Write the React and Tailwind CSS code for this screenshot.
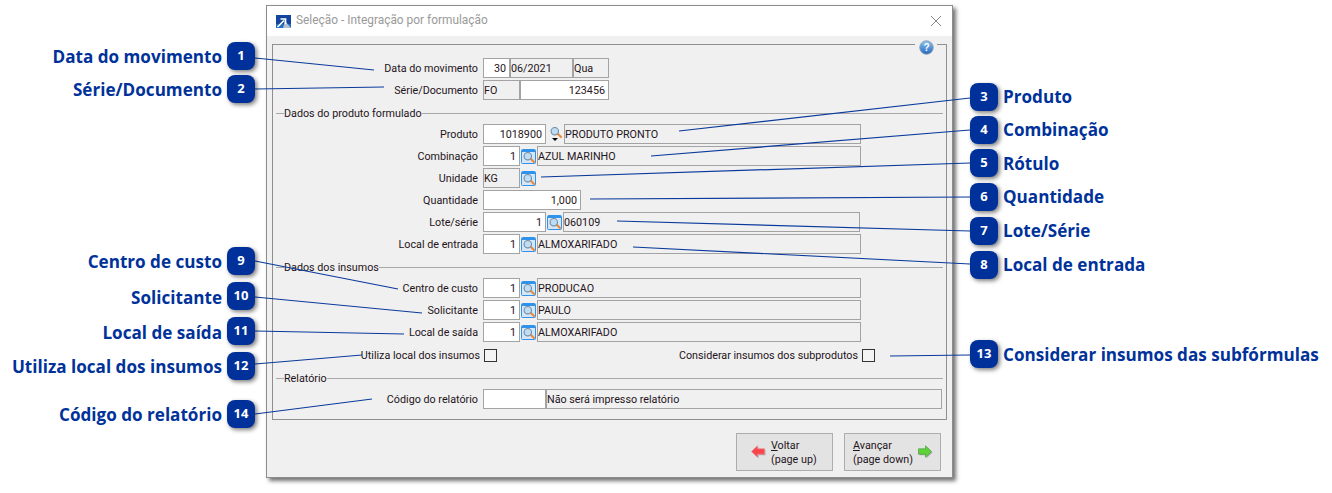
const UI = "font-['Roboto','Liberation_Sans',sans-serif] text-[10.75px] leading-none text-[#1f1420]";

function SearchIcon({ framed = true }) {
  return (
    <svg width="15" height="15" viewBox="0 0 15 15" className="block">
      {framed && <rect x="0.5" y="0.5" width="14" height="14" rx="1" fill="#d6e6f5" stroke="#2f93ec" />}
      {framed && <rect x="1" y="1" width="13" height="2" fill="#2f93ec" />}
      <line x1="9.5" y1="9.5" x2="13" y2="13" stroke="#ee8a3a" strokeWidth="2.2" strokeLinecap="round" />
      <circle cx="6.8" cy="7.2" r="3.7" fill="#bfdcf2" stroke="#6f8ea6" strokeWidth="1.1" />
    </svg>
  );
}

function Lookup() {
  return (
    <div className="w-[15px] h-[20px] flex items-center justify-center">
      <SearchIcon />
    </div>
  );
}

function Field({ w, white, right, children }) {
  return (
    <div
      className={`h-[20px] pt-[2px] border border-[#a3a3a3] flex items-center whitespace-nowrap overflow-hidden ${white ? "bg-white" : "bg-[#f0f0f0]"} ${right ? "justify-end pr-[3px]" : ""}`}
      style={{ width: w }}
    >
      {children}
    </div>
  );
}

function Row({ label, children, mt = "mt-[2px]" }) {
  return (
    <div className={`flex items-center h-[20px] ${mt}`}>
      <div className="w-[205px] pt-[2px] text-right whitespace-nowrap">{label}</div>
      <div className="ml-[5px] flex items-center gap-[1px]">{children}</div>
    </div>
  );
}

function Lk({ label, code, codeW = 37, text, textW = 324, mt }) {
  return (
    <Row label={label} mt={mt}>
      <Field w={codeW} white right>{code}</Field>
      <Lookup />
      <Field w={textW}>{text}</Field>
    </Row>
  );
}

function Section({ title, className }) {
  return (
    <div className={`flex items-center h-[12px] pl-[3px] pr-[3px] ${className}`}>
      <div className="w-[8px] h-px bg-[#a8a8a8]" />
      <span className="block pt-[2px] whitespace-nowrap">{title}</span>
      <div className="flex-1 h-px bg-[#a8a8a8]" />
    </div>
  );
}

function Arrow({ dir }) {
  const left = dir === "left";
  const d = left
    ? "M0.5 6.5 L6.5 0.8 V3.8 H13.5 V9.2 H6.5 V12.2 Z"
    : "M13.5 6.5 L7.5 0.8 V3.8 H0.5 V9.2 H7.5 V12.2 Z";
  return (
    <svg width="15" height="14" viewBox="0 0 15 14" className="block shrink-0">
      <path d={d} fill="#00000040" transform="translate(1 1)" />
      <path d={d} fill={left ? "#fb444c" : "#5fd23a"} stroke={left ? "#e8888c" : "#4f9f48"} strokeWidth="0.7" />
    </svg>
  );
}

function Badge({ n, className }) {
  return (
    <div className={`absolute w-[28px] h-[28px] rounded-[8px] bg-[#00309a] text-white flex items-center justify-center font-['Open_Sans',sans-serif] text-[13px] font-bold shadow-[2px_2px_4px_rgba(0,0,0,0.5)] ${className}`}>
      {n}
    </div>
  );
}

const LBL = "absolute whitespace-nowrap font-['Open_Sans',sans-serif] font-bold text-[17.1px] leading-[24px] text-[#00329a]";

const lines = [
  [255, 58, 374, 70], [255, 89, 384, 87], [970, 98, 679, 131], [970, 130, 651, 156],
  [970, 163, 541, 177], [970, 197, 590, 199], [970, 231, 617, 221], [970, 264, 633, 247],
  [255, 261, 398, 289], [255, 297, 422, 313], [255, 331, 404, 334], [255, 364, 362, 355],
  [970, 355, 890, 356], [255, 414, 372, 399],
];

export default function App() {
  return (
    <div className="relative w-[1332px] h-[493px] bg-white overflow-hidden pt-[5px] pl-[266px]">
      <div className={`w-[687px] h-[473px] bg-[#f0f0f0] border border-[#8c8c8c] shadow-[3px_3px_4px_rgba(0,0,0,0.55)] flex flex-col ${UI}`}>
        <div className="h-[30px] bg-white flex items-center pl-[9px] pr-[10px] shrink-0">
          <svg width="15" height="13" viewBox="0 0 15 13" className="block">
            <rect width="15" height="13" fill="#12459e" />
            <rect y="9" width="15" height="4" fill="#1f6fc4" />
            <path d="M9 6 L15 13 H7 Z" fill="#b4c0d0" />
            <path d="M1.5 12 L8 5.5 M4.5 4 H9.5 V9" stroke="#fff" strokeWidth="1.7" fill="none" />
          </svg>
          <span className="ml-[5px] text-[11.9px] text-[#9a9a9a]">Seleção - Integração por formulação</span>
          <svg width="12" height="12" viewBox="0 0 12 12" className="ml-auto block">
            <path d="M1 1 L11 11 M11 1 L1 11" stroke="#888" strokeWidth="1" />
          </svg>
        </div>

        <div className="relative mt-[8px] mx-[5px] h-[376px] border border-[#8f8f8f] flex flex-col pt-[13px]">
          <div className="absolute -top-[6px] right-[9px] w-[22px] h-[16px] bg-[#f0f0f0] flex items-center justify-center">
            <svg width="15" height="15" viewBox="0 0 15 15" className="block">
              <defs>
                <linearGradient id="h" x1="0" y1="0" x2="0" y2="1">
                  <stop offset="0" stopColor="#8cc4f0" />
                  <stop offset="1" stopColor="#2468c0" />
                </linearGradient>
              </defs>
              <circle cx="7.5" cy="7.5" r="6.8" fill="url(#h)" stroke="#8c9aa8" strokeWidth="0.8" />
              <text x="7.5" y="11" textAnchor="middle" fontSize="10" fontWeight="700" fill="#fff" fontFamily="'Liberation Sans',sans-serif">?</text>
            </svg>
          </div>

          <Row label="Data do movimento" mt="mt-0">
            <div className="flex">
              <Field w={27} white right>30</Field>
              <Field w={63}>06/2021</Field>
              <Field w={36}>Qua</Field>
            </div>
          </Row>
          <Row label="Série/Documento">
            <div className="flex">
              <Field w={37}>FO</Field>
              <Field w={89} white right>123456</Field>
            </div>
          </Row>

          <Section title="Dados do produto formulado" className="mt-[7px]" />

          <Row label="Produto" mt="mt-[5px]">
            <Field w={63} white right>1018900</Field>
            <div className="w-[16px] h-[20px] flex flex-col items-center">
              <SearchIcon framed={false} />
              <div className="w-0 h-0 -mt-[1px] border-l-[3px] border-r-[3px] border-t-[3px] border-l-transparent border-r-transparent border-t-black" />
            </div>
            <Field w={297}>PRODUTO PRONTO</Field>
          </Row>
          <Lk label="Combinação" code="1" text="AZUL MARINHO" />
          <Row label="Unidade">
            <Field w={37}>KG</Field>
            <Lookup />
          </Row>
          <Row label="Quantidade">
            <Field w={98} white right>1,000</Field>
          </Row>
          <Lk label="Lote/série" code="1" codeW={63} text="060109" textW={297} />
          <Lk label="Local de entrada" code="1" text="ALMOXARIFADO" />

          <Section title="Dados dos insumos" className="mt-[7px]" />

          <Lk label="Centro de custo" code="1" text="PRODUCAO" mt="mt-[5px]" />
          <Lk label="Solicitante" code="1" text="PAULO" />
          <Lk label="Local de saída" code="1" text="ALMOXARIFADO" />

          <div className="flex items-center h-[14px] mt-[6px]">
            <div className="w-[207px] pt-[2px] text-right whitespace-nowrap">Utiliza local dos insumos</div>
            <div className="ml-[4px] w-[13px] h-[13px] border border-[#333] bg-[#f4f4f4]" />
            <div className="w-[361px] pt-[2px] text-right whitespace-nowrap">Considerar insumos dos subprodutos</div>
            <div className="ml-[4px] w-[13px] h-[13px] border border-[#333] bg-[#f4f4f4]" />
          </div>

          <Section title="Relatório" className="mt-[10px]" />

          <Row label="Código do relatório" mt="mt-[5px]">
            <div className="flex">
              <Field w={63} white />
              <Field w={396}>Não será impresso relatório</Field>
            </div>
          </Row>
        </div>

        <div className="flex justify-end gap-[11px] mt-[13px] pr-[11px]">
          <button className="w-[97px] h-[38px] bg-[#e3e3e3] border border-[#adadad] flex items-center pl-[14px] gap-[5px] text-left">
            <Arrow dir="left" />
            <span className="block pt-[2px] leading-[14px]"><u>V</u>oltar<br />(page up)</span>
          </button>
          <button className="w-[97px] h-[38px] bg-[#e3e3e3] border border-[#adadad] flex items-center justify-between pl-[8px] pr-[7px] text-left">
            <span className="block pt-[2px] leading-[14px]"><u>A</u>vançar<br />(page down)</span>
            <Arrow dir="right" />
          </button>
        </div>
      </div>

      <svg width="1332" height="493" className="absolute left-0 top-0 pointer-events-none">
        {lines.map((l, i) => (
          <line key={i} x1={l[0]} y1={l[1]} x2={l[2]} y2={l[3]} stroke="#0a3a9c" strokeWidth="1.2" />
        ))}
      </svg>

      <span className={`${LBL} right-[1110px] top-[45px]`}>Data do movimento</span>
      <span className={`${LBL} right-[1110px] top-[78px]`}>Série/Documento</span>
      <span className={`${LBL} right-[1110px] top-[250px]`}>Centro de custo</span>
      <span className={`${LBL} right-[1110px] top-[286px]`}>Solicitante</span>
      <span className={`${LBL} right-[1110px] top-[321px]`}>Local de saída</span>
      <span className={`${LBL} right-[1110px] top-[355px]`}>Utiliza local dos insumos</span>
      <span className={`${LBL} right-[1110px] top-[403px]`}>Código do relatório</span>

      <span className={`${LBL} left-[1003px] top-[85px]`}>Produto</span>
      <span className={`${LBL} left-[1003px] top-[118px]`}>Combinação</span>
      <span className={`${LBL} left-[1003px] top-[152px]`}>Rótulo</span>
      <span className={`${LBL} left-[1003px] top-[185px]`}>Quantidade</span>
      <span className={`${LBL} left-[1003px] top-[219px]`}>Lote/Série</span>
      <span className={`${LBL} left-[1003px] top-[253px]`}>Local de entrada</span>
      <span className={`${LBL} left-[1003px] top-[343px]`}>Considerar insumos das subfórmulas</span>

      <Badge n="1" className="left-[227px] top-[42px]" />
      <Badge n="2" className="left-[227px] top-[75px]" />
      <Badge n="9" className="left-[227px] top-[247px]" />
      <Badge n="10" className="left-[227px] top-[282px]" />
      <Badge n="11" className="left-[227px] top-[317px]" />
      <Badge n="12" className="left-[227px] top-[352px]" />
      <Badge n="14" className="left-[227px] top-[400px]" />
      <Badge n="3" className="left-[970px] top-[83px]" />
      <Badge n="4" className="left-[970px] top-[116px]" />
      <Badge n="5" className="left-[970px] top-[149px]" />
      <Badge n="6" className="left-[970px] top-[183px]" />
      <Badge n="7" className="left-[970px] top-[217px]" />
      <Badge n="8" className="left-[970px] top-[251px]" />
      <Badge n="13" className="left-[970px] top-[340px]" />
    </div>
  );
}
